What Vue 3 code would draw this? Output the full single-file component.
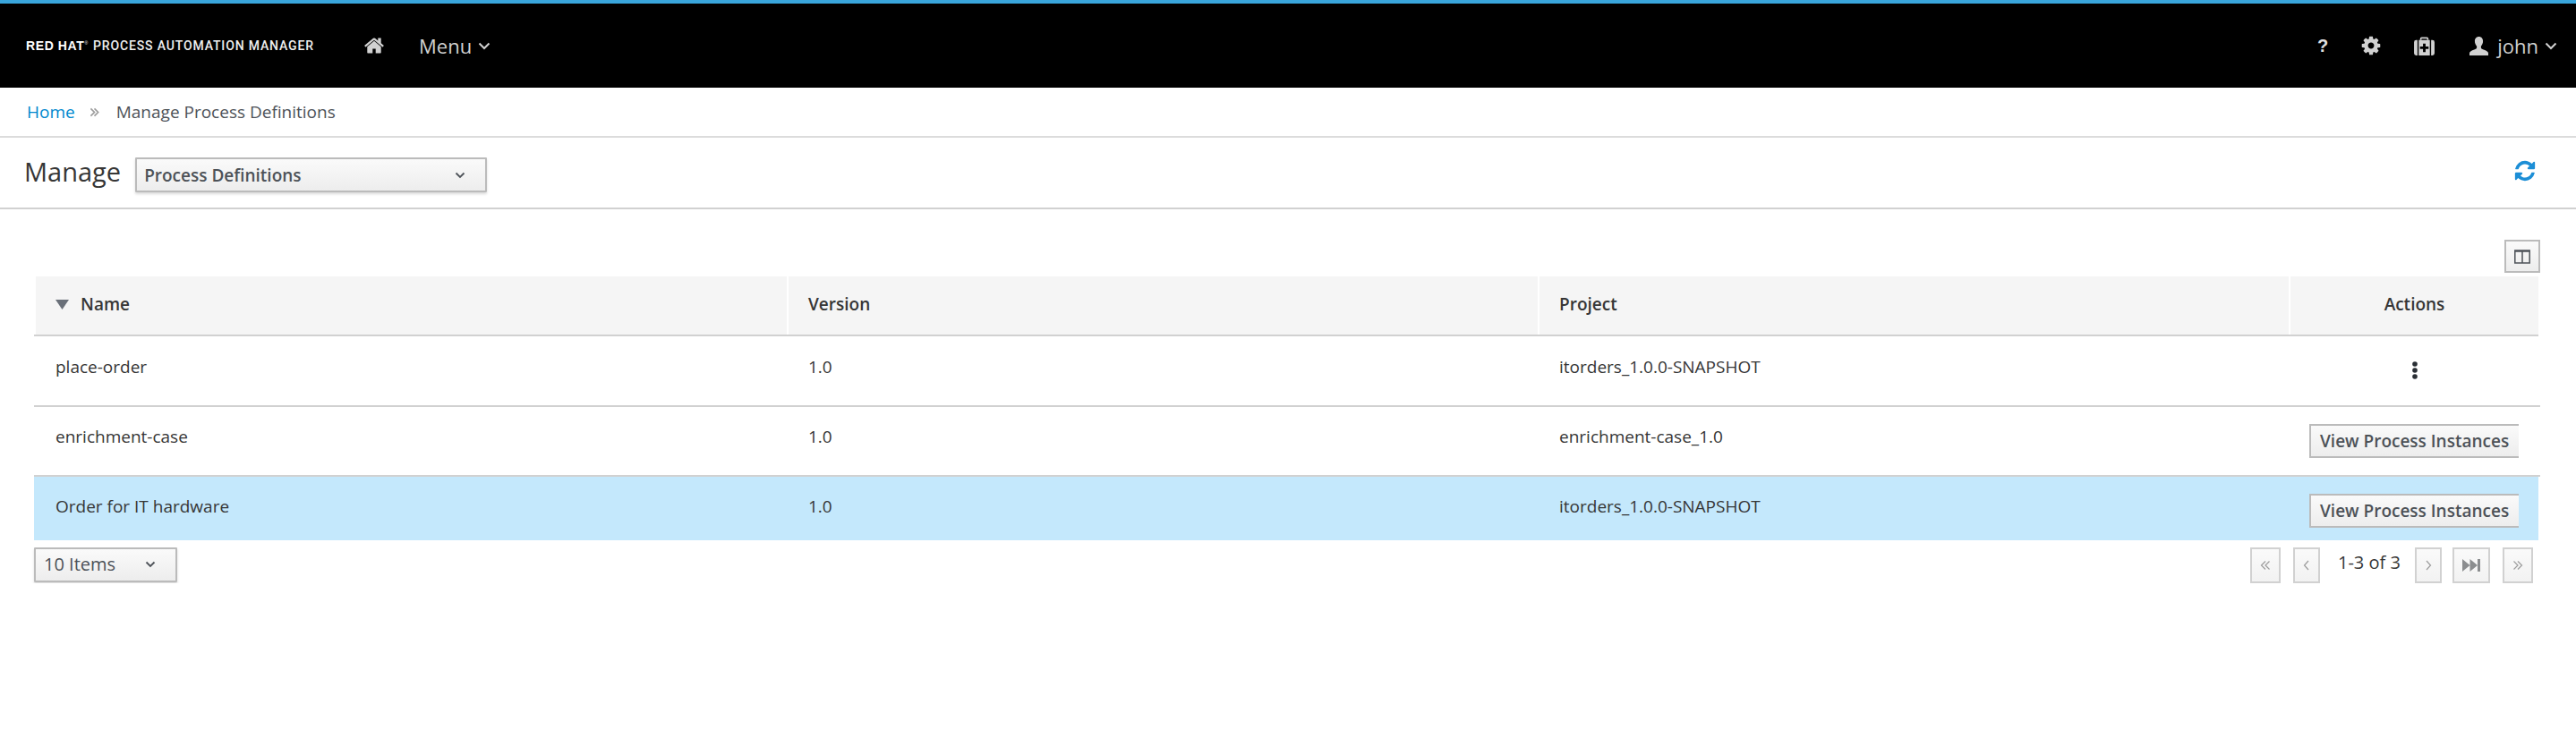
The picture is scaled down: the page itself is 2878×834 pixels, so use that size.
<script setup>
const rows = [
  { name: 'place-order', version: '1.0', project: 'itorders_1.0.0-SNAPSHOT', kebab: true },
  { name: 'enrichment-case', version: '1.0', project: 'enrichment-case_1.0' },
  { name: 'Order for IT hardware', version: '1.0', project: 'itorders_1.0.0-SNAPSHOT', selected: true }
]
</script>

<template>
  <div class="page">
    <header class="masthead">
      <div class="brand"><b>RED HAT</b><sup>®</sup><span class="product">PROCESS AUTOMATION MANAGER</span></div>
      <svg class="home" viewBox="0 0 1792 1792"><path d="M1472 992v480q0 26-19 45t-45 19h-384v-384h-256v384h-384q-26 0-45-19t-19-45v-480q0-1 .5-3t.5-3l575-474 575 474q1 2 1 6zm223-69l-62 74q-8 9-21 11h-3q-13 0-21-7l-692-577-692 577q-12 8-24 7-13-2-21-11l-62-74q-8-10-7-23.5t11-21.5l719-599q32-26 76-26t76 26l244 204v-195q0-14 9-23t23-9h192q14 0 23 9t9 23v408l219 182q10 8 11 21.5t-7 23.5z"/></svg>
      <span class="menu">Menu</span>
      <svg class="caret" viewBox="0 0 14 9"><path d="M1.500 1.500 7 7l5.500-5.500"/></svg>
      <div class="util">
        <span class="help">?</span>
        <svg class="cog" viewBox="0 0 1792 1792"><path d="M1152 896q0-106-75-181t-181-75-181 75-75 181 75 181 181 75 181-75 75-181zm512-109v222q0 12-8 23t-20 13l-185 28q-19 54-39 91 35 50 107 138 10 12 10 25t-9 23q-27 37-99 108t-94 71q-12 0-26-9l-138-108q-44 23-91 38-16 136-29 186-7 28-36 28h-222q-14 0-24.5-8.5t-11.5-21.500l-28-184q-49-16-90-37l-141 107q-10 9-25 9-14 0-25-11-126-114-165-168-7-10-7-23 0-12 8-23 15-21 51-66.500t54-70.500q-27-50-41-99l-183-27q-13-2-21-12.500t-8-23.500v-222q0-12 8-23t19-13l186-28q14-46 39-92-40-57-107-138-10-12-10-24 0-10 9-23 26-36 98.500-107.500t94.500-71.500q13 0 26 10l138 107q44-23 91-38 16-136 29-186 7-28 36-28h222q14 0 24.500 8.500t11.500 21.500l28 184q49 16 90 37l142-107q9-9 24-9 13 0 25 10 129 119 165 170 7 8 7 22 0 12-8 23-15 21-51 66.500t-54 70.500q26 50 41 98l183 28q13 2 21 12.500t8 23.500z"/></svg>
        <svg class="kit" viewBox="0 0 24 22">
          <path d="M7 4V2.500A2 2 0 0 1 9 .5h6a2 2 0 0 1 2 2V4h-1.800V2.300H8.800V4z"/>
          <path d="M0 6.500A2.500 2.500 0 0 1 2.500 4H4v18H2.500A2.500 2.500 0 0 1 0 19.500zM5.500 4h13v18h-13zM20 4h1.500A2.500 2.500 0 0 1 24 6.500v13a2.500 2.500 0 0 1-2.500 2.500H20z"/>
          <path class="plus" d="M10.500 8h3v3.500H17v3h-3.500V18h-3v-3.500H7v-3h3.500z"/>
        </svg>
        <svg class="user" viewBox="0 0 22 22"><path d="M11 0c3 0 4.800 2.300 4.800 5.300 0 2.400-1 4.400-2.300 5.700v2c0 .8 1 1.300 3 2.100 3 1.200 5.500 2.300 5.500 3.900V22H0v-3c0-1.600 2.500-2.700 5.500-3.900 2-.8 3-1.300 3-2.100v-2C7.200 9.700 6.200 7.700 6.200 5.300 6.200 2.300 8 0 11 0z"/></svg>
        <span class="john">john</span>
        <svg class="caret john-caret" viewBox="0 0 14 9"><path d="M1.500 1.500 7 7l5.500-5.500"/></svg>
      </div>
    </header>

    <nav class="crumbs">
      <a>Home</a>
      <svg class="sep" viewBox="0 0 12 12"><path d="M1.500 1.500 6 6l-4.500 4.500M6 1.500 10.500 6 6 10.500"/></svg>
      <span>Manage Process Definitions</span>
    </nav>

    <section class="toolbar">
      <h1>Manage</h1>
      <button class="select wide">
        <span>Process Definitions</span>
        <svg class="chev" viewBox="0 0 12 8"><path d="M1.500 1.500 6 6l4.500-4.500"/></svg>
      </button>
      <svg class="refresh" viewBox="0 0 1792 1792"><path d="M1639 1056q0 5-1 7-64 268-268 434.500t-478 166.500q-146 0-282.500-55t-243.500-157l-129 129q-19 19-45 19t-45-19-19-45v-448q0-26 19-45t45-19h448q26 0 45 19t19 45-19 45l-137 137q71 66 161 102t187 36q134 0 250-65t186-179q11-17 53-117 8-23 30-23h192q13 0 22.500 9.500t9.500 22.500zm25-800v448q0 26-19 45t-45 19h-448q-26 0-45-19t-19-45 19-45l138-138q-148-137-349-137-134 0-250 65t-186 179q-11 17-53 117-8 23-30 23h-199q-13 0-22.500-9.500t-9.500-22.500v-7q65-268 270-434.500t480-166.500q146 0 284 55.500t245 156.500l130-129q19-19 45-19t45 19 19 45z"/></svg>
    </section>

    <main class="content">
      <div class="tools">
        <button class="col-toggle">
          <svg viewBox="0 0 18 16"><path d="M.8 1h16.400v14H.8zM9 1v14M.8 2h16.400" /></svg>
        </button>
      </div>

      <div class="grid head">
        <div class="th name">
          <svg class="sort" viewBox="0 0 15 12"><path d="M0 1h15L7.500 12z"/></svg>
          Name
        </div>
        <div class="th">Version</div>
        <div class="th">Project</div>
        <div class="th actions">Actions</div>
      </div>

      <div v-for="r in rows" :key="r.name" class="grid row" :class="{ selected: r.selected, kebab: r.kebab }">
        <div class="td">{{ r.name }}</div>
        <div class="td">{{ r.version }}</div>
        <div class="td">{{ r.project }}</div>
        <div class="td actions">
          <svg v-if="r.kebab" class="dots" viewBox="0 0 6 20"><circle cx="3" cy="3" r="2.800"/><circle cx="3" cy="10" r="2.800"/><circle cx="3" cy="17" r="2.800"/></svg>
          <button v-else class="view">View Process Instances</button>
        </div>
      </div>

      <div class="footer">
        <button class="select small">
          <span>10 Items</span>
          <svg class="chev" viewBox="0 0 12 8"><path d="M1.500 1.500 6 6l4.500-4.500"/></svg>
        </button>
        <div class="pager">
          <button class="pg w34"><svg viewBox="0 0 12 12"><path d="M6 1.500 1.500 6 6 10.500M10.500 1.500 6 6l4.500 4.500"/></svg></button>
          <button class="pg w30"><svg viewBox="0 0 12 12"><path d="M8 1 3.500 6 8 11"/></svg></button>
          <span class="count">1-3 of 3</span>
          <button class="pg w30"><svg viewBox="0 0 12 12"><path d="M4 1l4.500 5L4 11"/></svg></button>
          <button class="pg w42"><svg class="solid" viewBox="0 0 20 14"><path d="M0 0l8.500 7L0 14zM8.500 0 17 7l-8.500 7zM17 0h3v14h-3z"/></svg></button>
          <button class="pg w34"><svg viewBox="0 0 12 12"><path d="M1.500 1.500 6 6l-4.500 4.500M6 1.500 10.500 6 6 10.500"/></svg></button>
        </div>
      </div>
    </main>
  </div>
</template>

<style>
html, body { margin: 0; background: #fff; }
</style>

<style scoped>
.page {
  width: 2878px;
  font-family: "Open Sans", "Liberation Sans", sans-serif;
  font-size: 19px;
  color: #363636;
}
.masthead {
  box-sizing: border-box;
  height: 98px;
  border-top: 4px solid #39a5dc;
  background: #000;
  display: flex;
  align-items: center;
  color: #d1d1d1;
}
.brand {
  margin-left: 29px;
  width: 377px;
  font-family: "Liberation Sans", sans-serif;
  font-size: 14px;
  color: #f0f0f0;
  white-space: nowrap;
}
.brand b { font-weight: 700; color: #fff; letter-spacing: .6px; }
.brand sup { font-size: 5px; }
.product { margin-left: 6px; font-family: Roboto, sans-serif; font-weight: 500; font-size: 14px; letter-spacing: .85px; }
.home { width: 24px; height: 24px; fill: #d1d1d1; }
.menu { margin-left: 38px; font-size: 22px; }
.caret { width: 14px; height: 9px; margin-left: 7px; fill: none; stroke: #d1d1d1; stroke-width: 2; }
.util { margin-left: auto; display: flex; align-items: center; }
.help { font-size: 20px; font-weight: 700; font-family: "Liberation Sans", sans-serif; color: #e0e0e0; }
.cog { width: 24px; height: 24px; margin-left: 36px; fill: #d1d1d1; }
.kit { width: 23px; height: 21px; margin-left: 36px; fill: #d1d1d1; }
.kit .plus { fill: #000; }
.user { width: 21px; height: 21px; margin-left: 39px; fill: #d1d1d1; }
.john { margin-left: 10px; font-size: 22px; color: #d1d1d1; }
.john-caret { margin-right: 21px; }

.crumbs {
  box-sizing: border-box;
  height: 56px;
  padding-left: 30px;
  border-bottom: 2px solid #dcdcdc;
  display: flex;
  align-items: center;
  font-size: 19px;
  color: #4d5258;
}
.crumbs a { color: #0088ce; }
.sep { width: 11px; height: 11px; margin: 0 19px 0 16px; fill: none; stroke: #9c9c9c; stroke-width: 1.800; }

.toolbar {
  box-sizing: border-box;
  height: 80px;
  padding-left: 27px;
  border-bottom: 2px solid #d1d1d1;
  display: flex;
  align-items: center;
}
h1 { margin: 0 0 4px; font-size: 29px; font-weight: 400; color: #363636; }
.select {
  box-sizing: border-box;
  display: flex;
  align-items: center;
  justify-content: space-between;
  font-family: inherit;
  font-weight: 600;
  color: #4d5258;
  border: 2px solid #bbb;
  background: linear-gradient(#fafafa, #ededed);
  box-shadow: 0 2px 3px rgba(0, 0, 0, .15);
  border-radius: 1px;
}
.select.wide {
  width: 393px;
  height: 39px;
  margin-left: 16px;
  margin-top: 5px;
  padding: 0 22px 0 8px;
  font-size: 19px;
}
.select.small {
  width: 160px;
  height: 39px;
  padding: 0 22px 2px 9px;
  font-size: 20px;
  font-weight: 500;
}
.chev { width: 12px; height: 8px; fill: none; stroke: #4d5258; stroke-width: 1.800; }
.refresh { width: 26px; height: 26px; margin: 0 44px 4px auto; fill: #1c8ed6; }

.content { padding: 0 40px 0 38px; }
.tools { display: flex; justify-content: flex-end; padding-top: 34px; height: 37px; margin-bottom: 4px; }
.col-toggle {
  box-sizing: border-box;
  width: 40px;
  height: 37px;
  padding: 0;
  border: 2px solid #bbb;
  background: linear-gradient(#fafafa, #ededed);
  display: flex;
  align-items: center;
  justify-content: center;
}
.col-toggle svg { width: 18px; height: 16px; fill: none; stroke: #4d5258; stroke-width: 1.500; }

.grid {
  display: grid;
  grid-template-columns: 841px 839px 839px 281px;
}
.head { height: 67px; border-bottom: 2px solid #d1d1d1; box-sizing: border-box; width: 2798px; grid-template-columns: 841px 839px 839px 279px; }
.th {
  background: #f5f5f5;
  display: flex;
  align-items: center;
  padding: 0 0 3px 22px;
  font-weight: 600;
  border-left: 2px solid #fff;
}
.th.name { gap: 13px; }
.sort { width: 15px; height: 12px; fill: #6a7079; }
.th.actions { justify-content: center; padding-left: 0; }
.row { box-sizing: border-box; border-bottom: 2px solid #d1d1d1; height: 78px; }
.row.kebab { height: 79px; }
.row.selected { background: #c4e8fc; border-bottom: 0; height: 71px; width: 2798px; grid-template-columns: 841px 839px 839px 279px; }
.td {
  display: flex;
  align-items: center;
  padding-left: 24px;
  padding-bottom: 10px;
}
.row.kebab .td { padding-bottom: 9px; }
.row.selected .td { padding-bottom: 6px; }
.row .td.actions { justify-content: flex-start; align-items: flex-start; padding: 19px 0 0; }
.row.kebab .td.actions { justify-content: center; align-items: center; padding: 0 0 2px; }
.dots { width: 6px; height: 20px; fill: #292e34; }
.view {
  box-sizing: border-box;
  width: 234px;
  height: 38px;
  margin-left: 23px;
  padding: 0 0 0 10px;
  text-align: left;
  white-space: nowrap;
  overflow: hidden;
  font-family: inherit;
  font-size: 19px;
  font-weight: 600;
  color: #4d5258;
  border: 2px solid #bbb;
  border-right: 0;
  background: linear-gradient(#fafafa, #ededed);
}
.footer { display: flex; justify-content: space-between; align-items: flex-start; padding-top: 8px; }
.pager { display: flex; align-items: flex-start; padding-right: 8px; }
.pg {
  box-sizing: border-box;
  height: 40px;
  padding: 0;
  margin-top: 0;
  border: 2px solid #d1d1d1;
  background: linear-gradient(#fafafa, #f2f2f2);
  display: flex;
  align-items: center;
  justify-content: center;
}
.pg svg { width: 12px; height: 12px; fill: none; stroke: #9c9c9c; stroke-width: 1.200; }
.pg svg.solid { width: 20px; height: 14px; fill: #8b8d8f; stroke: none; }
.w34 { width: 34px; margin-right: 14px; }
.w30 { width: 30px; margin-right: 12px; }
.w42 { width: 42px; margin-right: 14px; }
.pager .w34:last-child { margin-right: 0; }
.pager .w30:nth-child(2) { margin-right: 20px; }
.count { width: 86px; font-size: 20px; line-height: 34px; color: #363636; }
</style>
